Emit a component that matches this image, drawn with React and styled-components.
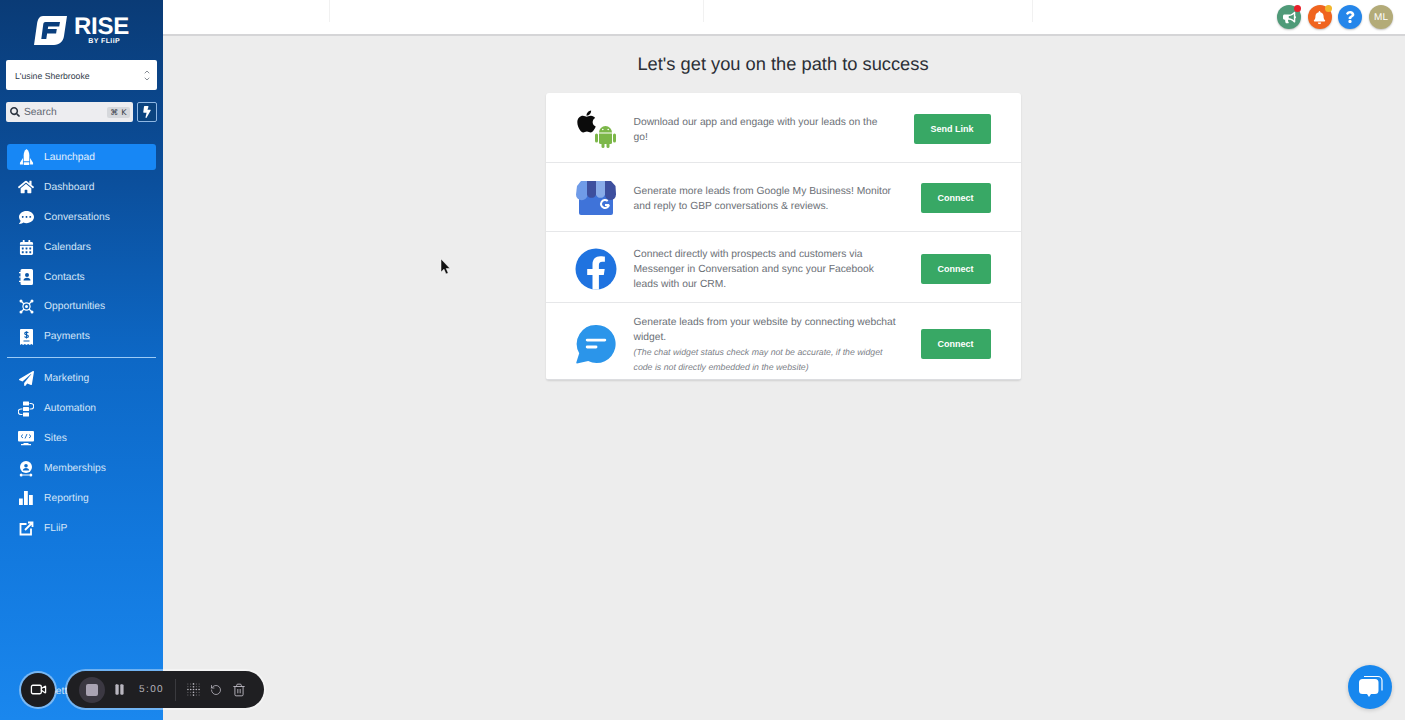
import React from "react";
import styled, { createGlobalStyle } from "styled-components";
import { ChevronUp, ChevronDown, Video, Pause, RotateCcw, Trash2 } from "lucide-react";
import {
  FaApple, FaBell, FaBullhorn, FaQuestion, FaSearch, FaBolt, FaHome, FaCommentDots,
  FaCalendarAlt, FaPaperPlane,
} from "react-icons/fa";

const GlobalStyle = createGlobalStyle`
  html, body { margin: 0; padding: 0; height: 100%; overflow: hidden; }
  body {
    font-family: "Liberation Sans", Arial, sans-serif;
    background: #ededed;
    text-rendering: geometricPrecision;
  }
  * { box-sizing: border-box; }
`;

const Page = styled.div`
  position: relative;
  display: flex;
  width: 1405px;
  height: 720px;
  overflow: hidden;
  background: #ededed;
`;

const Sidebar = styled.aside`
  display: flex;
  flex-direction: column;
  width: 163px;
  flex: none;
  height: 720px;
  padding: 16px 6px 0;
  background: linear-gradient(180deg, #0a3b76 0%, #0b4f9c 25%, #0d68c6 50%, #1278dd 75%, #1a87ee 100%);
`;

const LogoRow = styled.div`
  display: flex;
  align-items: flex-start;
  justify-content: center;
  gap: 7px;
  height: 44px;
  color: #fff;
`;

const LogoWords = styled.div`
  display: flex;
  flex-direction: column;
  align-items: flex-end;
  line-height: 1;
`;

const LogoTitle = styled.span`
  font-size: 24px;
  font-weight: 700;
  line-height: 21px;
  letter-spacing: -0.2px;
`;

const LogoSub = styled.span`
  margin-top: 1px;
  padding-right: 9px;
  font-size: 7px;
  font-weight: 700;
  letter-spacing: 0.4px;
`;

const Select = styled.div`
  display: flex;
  align-items: center;
  justify-content: space-between;
  height: 30px;
  padding: 1px 6px 0 9px;
  background: #fff;
  border-radius: 2px;
  font-size: 8.7px;
  color: #2f3a48;
`;

const Carets = styled.span`
  display: flex;
  flex-direction: column;
  align-items: center;
  color: #6f7680;
  svg { margin: -0.5px 0; }
`;

const SearchRow = styled.div`
  display: flex;
  gap: 4px;
  margin-top: 12px;
`;

const SearchBox = styled.div`
  display: flex;
  align-items: center;
  flex: 1;
  gap: 4px;
  height: 20px;
  padding: 0 3px 0 4px;
  background: #ededf0;
  border-radius: 2px;
  font-size: 10.3px;
  color: #5f6670;
  svg { color: #2c3440; }
`;

const SearchLabel = styled.span`
  flex: 1;
`;

const Kbd = styled.span`
  width: 23px;
  height: 11px;
  background: #d6d8dc;
  border-radius: 2px;
  font-size: 8px;
  line-height: 11px;
  text-align: center;
  letter-spacing: 0.3px;
  color: #39404a;
  font-family: "DejaVu Sans", sans-serif;
`;

const BoltButton = styled.button`
  display: flex;
  align-items: center;
  justify-content: center;
  width: 20px;
  height: 20px;
  padding: 0;
  background: #0a437f;
  border: 1px solid #8fb7e3;
  border-radius: 2px;
  color: #fff;
`;

const NavList = styled.nav`
  display: flex;
  flex-direction: column;
  gap: 3.9px;
  padding: 0 1px;
  margin-top: ${(p) => p.$top}px;
`;

const NavItem = styled.div`
  display: flex;
  align-items: center;
  height: 26px;
  padding: 1px 0 0 11px;
  border-radius: 3px;
  font-size: 10.3px;
  color: ${(p) => (p.$active ? "#e4f0fe" : "#d4e5f8")};
  background: ${(p) => (p.$active ? "#1787f5" : "transparent")};
`;

const NavIcon = styled.span`
  display: flex;
  align-items: center;
  justify-content: center;
  flex: none;
  width: 16px;
  height: 16px;
  margin-right: 10px;
  color: #fff;
`;

const Divider = styled.hr`
  width: 149px;
  height: 1px;
  margin: 8px 0 0 1px;
  border: 0;
  background: #9ccbf6;
`;

const SettingsRow = styled(NavList)`
  margin-top: auto;
  margin-bottom: 16px;
`;

const SettingsItem = styled(NavItem)`
  padding-left: 16px;
`;

const Main = styled.main`
  display: flex;
  flex-direction: column;
  flex: 1;
  min-width: 0;
`;

const TopBar = styled.header`
  display: grid;
  grid-template-columns: 167px 374px 329px 1fr;
  flex: none;
  height: 36px;
  background: #fff;
  border-bottom: 2px solid #d5d5d7;
`;

const TopCell = styled.div`
  border-right: 1px solid #f1f1f1;
  height: 22px;
  &:last-child { border-right: 0; height: 34px; }
`;

const TopActions = styled.div`
  display: flex;
  align-items: center;
  justify-content: flex-end;
  gap: 6.6px;
  height: 34px;
  padding-right: 12px;
`;

const RoundAction = styled.span`
  position: relative;
  display: flex;
  align-items: center;
  justify-content: center;
  width: 24px;
  height: 24px;
  border-radius: 50%;
  background: ${(p) => p.$bg};
  color: #fff;
  font-size: 10px;
  box-shadow: 0 1px 2px rgba(0, 0, 0, 0.25);
`;

const Dot = styled.span`
  position: absolute;
  top: 0;
  right: 0;
  width: 7px;
  height: 7px;
  border-radius: 50%;
  background: ${(p) => p.$bg};
`;

const Content = styled.div`
  display: flex;
  flex-direction: column;
  align-items: center;
  padding: 16px 2px 0 0;
`;

const Heading = styled.h1`
  margin: 0 0 17px;
  font-size: 18.3px;
  line-height: 24px;
  font-weight: 400;
  color: #2b2f36;
`;

const Card = styled.section`
  width: 475px;
  background: #fff;
  border-radius: 3px;
  box-shadow: 0 1px 2px rgba(0, 0, 0, 0.12);
`;

const Row = styled.div`
  display: flex;
  align-items: center;
  height: ${(p) => p.$height}px;
  padding: ${(p) => p.$nudge}px 30px 0 29px;
  border-bottom: 1px solid #e6e7e9;
  &:last-child { border-bottom: 1px solid #dcdde0; }
`;

const RowIcon = styled.div`
  position: relative;
  display: flex;
  align-items: center;
  justify-content: center;
  flex: none;
  width: 42px;
  height: 42px;
  margin-right: 17px;
`;

const RowText = styled.div`
  flex: 1;
  min-width: 0;
  padding: 2px 21px 0 0;
  font-size: 10.3px;
  line-height: 15px;
  color: #6b6f76;
`;

const RowNote = styled.em`
  display: block;
  max-width: 258px;
  font-size: 8.75px;
  color: #7c8087;
`;

const ConnectButton = styled.button`
  flex: none;
  width: ${(p) => p.$width}px;
  height: 30px;
  padding: 0;
  background: #38a865;
  border: 0;
  border-radius: 2px;
  color: #fff;
  font-family: inherit;
  font-size: 9px;
  font-weight: 700;
`;

const AppleMark = styled.span`
  position: absolute;
  left: -1px;
  top: 1px;
  color: #0b0b0b;
  display: flex;
`;

const AndroidMark = styled.svg`
  position: absolute;
  right: 1px;
  bottom: 2px;
`;

const Recorder = styled.div`
  position: absolute;
  left: 21px;
  top: 671px;
  display: flex;
  align-items: center;
  gap: 12px;
`;

const CameraButton = styled.span`
  display: flex;
  align-items: center;
  justify-content: center;
  width: 34px;
  height: 34px;
  border-radius: 50%;
  background: #1c1c1f;
  box-shadow: 0 0 0 2px rgba(255, 255, 255, 0.42);
  color: #fff;
`;

const RecorderBar = styled.div`
  display: flex;
  align-items: center;
  width: 197px;
  height: 37px;
  padding: 0 12px;
  border-radius: 19px;
  background: #1f1f22;
  box-shadow: 0 0 0 2px rgba(255, 255, 255, 0.38);
  color: #b9b6bf;
`;

const StopHalo = styled.span`
  display: flex;
  align-items: center;
  justify-content: center;
  flex: none;
  width: 26px;
  height: 26px;
  border-radius: 50%;
  background: #3b3842;
`;

const StopSquare = styled.span`
  width: 12px;
  height: 12px;
  border-radius: 2px;
  background: #a9a3b3;
`;

const Timer = styled.span`
  width: 25px;
  margin: 0 11px 0 13px;
  font-size: 10px;
  letter-spacing: 1.4px;
  white-space: nowrap;
  color: #b5b3ba;
`;

const BarSep = styled.span`
  flex: none;
  width: 1px;
  height: 22px;
  margin-right: 11px;
  background: #3a3a3e;
`;

const RecorderTools = styled.span`
  display: flex;
  align-items: center;
  gap: 10px;
`;

const PauseSlot = styled.span`
  display: flex;
  margin-left: 8px;
`;

const ChatFab = styled.button`
  position: absolute;
  left: 1348px;
  top: 665px;
  display: flex;
  align-items: center;
  justify-content: center;
  width: 44px;
  height: 44px;
  padding: 0;
  border: 0;
  border-radius: 50%;
  background: #1787ee;
  box-shadow: 0 1px 4px rgba(0, 0, 0, 0.18);
`;

const Cursor = styled.svg`
  position: absolute;
  left: 440px;
  top: 259px;
`;

const Rocket = () => (
  <svg width="15" height="17" viewBox="0 0 16 18" fill="#fff">
    <path d="M8 0C5.8 1.8 5 4 5 6.5V13h6V6.5C11 4 10.2 1.8 8 0z" />
    <path d="M4.2 9.5 1 14.5v2h3.2zM11.8 9.5l3.2 5v2h-3.2z" />
    <rect x="5" y="14" width="6" height="3" rx="0.5" />
  </svg>
);

const Contacts = () => (
  <svg width="14" height="16" viewBox="0 0 14 16">
    <path fill="#fff" d="M3 0h9.5A1.5 1.5 0 0 1 14 1.5v13a1.5 1.5 0 0 1-1.5 1.5H3a1.5 1.5 0 0 1-1.5-1.5v-13A1.5 1.5 0 0 1 3 0z" />
    <path fill="#fff" d="M0 3h2.5v1.2H0zM0 7.4h2.5v1.2H0zM0 11.8h2.5V13H0z" />
    <circle cx="8" cy="6" r="2" fill="#0b57a8" />
    <path fill="#0b57a8" d="M4.5 11.5c0-2 1.6-2.8 3.5-2.8s3.5.8 3.5 2.8z" />
  </svg>
);

const Opportunities = () => (
  <svg width="15" height="15" viewBox="0 0 15 15" fill="none" stroke="#fff" strokeWidth="1.2">
    <circle cx="7.5" cy="7.5" r="3.6" />
    <circle cx="7.5" cy="7.5" r="1.5" fill="#fff" stroke="none" />
    <path d="M2 2l3 3M13 2l-3 3M2 13l3-3M13 13l-3-3" />
    <g fill="#fff" stroke="none">
      <circle cx="2" cy="2" r="1.5" />
      <circle cx="13" cy="2" r="1.5" />
      <circle cx="2" cy="13" r="1.5" />
      <circle cx="13" cy="13" r="1.5" />
    </g>
  </svg>
);

const Payments = () => (
  <svg width="13" height="16" viewBox="0 0 13 16">
    <path fill="#fff" d="M1 0h11a1 1 0 0 1 1 1v15l-1.6-1-1.6 1-1.6-1-1.7 1-1.7-1-1.6 1-1.6-1L0 16V1a1 1 0 0 1 1-1z" />
    <path fill="#0b5fb5" d="M3.5 11.5h6v1h-6z" />
    <path fill="none" stroke="#0b5fb5" strokeWidth="1.1" d="M8.3 4c-.4-.6-1-.9-1.8-.9-1 0-1.8.5-1.8 1.3 0 1.8 3.7.9 3.7 2.8 0 .8-.9 1.3-1.9 1.3-.9 0-1.6-.4-2-1M6.5 2.2v7.2" />
  </svg>
);

const Automation = () => (
  <svg width="16" height="16" viewBox="0 0 16 16" fill="#fff">
    <rect x="5" y="0.5" width="6" height="4" rx="0.5" />
    <rect x="5" y="6" width="6" height="4" rx="0.5" />
    <rect x="5" y="11.5" width="6" height="4" rx="0.5" />
    <path fill="none" stroke="#fff" strokeWidth="1.1" d="M11.5 2.5h1.5a2 2 0 0 1 0 5.5h-1.5M4.5 8H3a2.7 2.7 0 0 0 0 5.5h1.5" />
  </svg>
);

const Sites = () => (
  <svg width="16" height="15" viewBox="0 0 16 15">
    <rect width="16" height="10.5" rx="1" fill="#fff" />
    <path fill="#fff" d="M5.5 12h5v1h2.5v1.3H3V13h2.5z" />
    <path fill="none" stroke="#0c66c2" strokeWidth="0.9" d="M5 3.5 3 5.3 5 7M11 3.5l2 1.8L11 7M9 3 7 7.5" />
  </svg>
);

const Memberships = () => (
  <svg width="14" height="16" viewBox="0 0 14 16">
    <circle cx="7" cy="6" r="6" fill="#fff" />
    <circle cx="7" cy="4.7" r="1.8" fill="#0c6ccb" />
    <path fill="#0c6ccb" d="M3.8 9.5c0-1.8 1.5-2.6 3.2-2.6s3.2.8 3.2 2.6z" />
    <circle cx="2.2" cy="14" r="1.5" fill="#fff" />
    <circle cx="11.8" cy="14" r="1.5" fill="#fff" />
    <path fill="none" stroke="#fff" d="M3.5 14h7" />
  </svg>
);

const Reporting = () => (
  <svg width="14" height="14" viewBox="0 0 14 14" fill="#fff">
    <rect x="0" y="7.5" width="3.8" height="6.5" />
    <rect x="5" y="0" width="3.8" height="14" />
    <rect x="10" y="4" width="3.8" height="10" />
  </svg>
);

const ExternalEdit = () => (
  <svg width="15" height="15" viewBox="0 0 15 15" fill="none" stroke="#fff" strokeWidth="1.8">
    <path d="M7.5 3H1.5v10.5H12V7.5" />
    <path d="M6 9 13 2M9 1.5h4.5V6" />
  </svg>
);

const LogoMark = () => (
  <svg width="33" height="29" viewBox="0 0 33 29">
    <path fill="#fff" fillRule="evenodd" d="M9 0h24l-3 20c-.8 5.5-4.5 9-10 9H0L3 8C3.7 3 5.5 0 9 0zm2.5 6c-1.3 0-2 .7-2.2 2l-2 15h5l.8-5.5h9l.7-4.5h-9l.4-2.5h11l.8-4.5z" />
  </svg>
);

const Gbp = () => (
  <svg width="40" height="36" viewBox="0 0 40 36">
    <path fill="#3f73d9" d="M3 13h34v20a2 2 0 0 1-2 2H5a2 2 0 0 1-2-2z" />
    <path fill="#6f9be8" d="M5 1h6.5v13.5a5.5 5.5 0 0 1-11.5 0L1 6z" />
    <path fill="#3d4f9e" d="M11 1h9v13.5a4.7 4.7 0 0 1-9 0z" />
    <path fill="#89ace9" d="M20 1h9v13.5a4.7 4.7 0 0 1-9 0z" />
    <path fill="#3d4f9e" d="M29 1h6l4.5 5 .5 8.5a5.5 5.5 0 0 1-11 0z" />
    <path fill="none" stroke="#fff" strokeWidth="2" d="M33 24.5a4 4 0 1 1-1.3-3.5M33 25h-4" />
  </svg>
);

const Facebook = () => (
  <svg width="42" height="42" viewBox="0 0 42 42">
    <circle cx="21" cy="21" r="20.5" fill="#1f73e0" />
    <path fill="#fff" d="M17.5 41.5V27h-5.3v-6h5.3v-4.6c0-5.2 3.1-8.1 7.8-8.1 2.3 0 4.6.4 4.6.4v5.1h-2.6c-2.6 0-3.4 1.6-3.4 3.2V21h5.8l-.9 6h-4.9v14.5z" />
  </svg>
);

const ChatBubble = () => (
  <svg width="40" height="40" viewBox="0 0 41 41">
    <path fill="#2b95ea" d="M21 1a19.5 19.5 0 1 1-8.5 37L1 40.5c-.7 0-.9-.6-.6-1.2L3.3 30A19.5 19.5 0 0 1 21 1z" />
    <rect x="10" y="15" width="21" height="3" rx="1.5" fill="#fff" />
    <rect x="10" y="22" width="12" height="3" rx="1.5" fill="#fff" />
  </svg>
);

const GripDots = () => (
  <svg width="13" height="13" viewBox="0 0 14 14" fill="#b5b3ba">
    {[1, 4, 7, 10, 13].flatMap((x) =>
      [1, 4, 7, 10, 13].map((y) => <circle key={`${x}-${y}`} cx={x} cy={y} r={x === 7 || y === 7 ? 0.9 : 0.5} />)
    )}
  </svg>
);

const primaryNav = [
  ["Launchpad", <Rocket />, true],
  ["Dashboard", <FaHome size={16} />],
  ["Conversations", <FaCommentDots size={15} />],
  ["Calendars", <FaCalendarAlt size={15} />],
  ["Contacts", <Contacts />],
  ["Opportunities", <Opportunities />],
  ["Payments", <Payments />],
];

const secondaryNav = [
  ["Marketing", <FaPaperPlane size={15} />],
  ["Automation", <Automation />],
  ["Sites", <Sites />],
  ["Memberships", <Memberships />],
  ["Reporting", <Reporting />],
  ["FLiiP", <ExternalEdit />],
];

const NavLink = ({ label, icon, active }) => (
  <NavItem $active={active}>
    <NavIcon>{icon}</NavIcon>
    {label}
  </NavItem>
);

export default function App() {
  return (
    <Page>
      <GlobalStyle />
      <Sidebar>
        <LogoRow>
          <LogoMark />
          <LogoWords>
            <LogoTitle>RISE</LogoTitle>
            <LogoSub>BY FLiiP</LogoSub>
          </LogoWords>
        </LogoRow>
        <Select>
          L'usine Sherbrooke
          <Carets>
            <ChevronUp size={8} strokeWidth={2.5} />
            <ChevronDown size={8} strokeWidth={2.5} />
          </Carets>
        </Select>
        <SearchRow>
          <SearchBox>
            <FaSearch size={10} />
            <SearchLabel>Search</SearchLabel>
            <Kbd>⌘ K</Kbd>
          </SearchBox>
          <BoltButton>
            <FaBolt size={12} />
          </BoltButton>
        </SearchRow>
        <NavList $top={22}>
          {primaryNav.map(([label, icon, active]) => (
            <NavLink key={label} label={label} icon={icon} active={active} />
          ))}
        </NavList>
        <Divider />
        <NavList $top={7}>
          {secondaryNav.map(([label, icon]) => (
            <NavLink key={label} label={label} icon={icon} />
          ))}
        </NavList>
        <SettingsRow $top={0}>
          <SettingsItem>
            <NavIcon />
            Settings
          </SettingsItem>
        </SettingsRow>
      </Sidebar>
      <Main>
        <TopBar>
          <TopCell />
          <TopCell />
          <TopCell />
          <TopCell>
            <TopActions>
              <RoundAction $bg="#4f9a78">
                <FaBullhorn size={13} />
                <Dot $bg="#e8212b" />
              </RoundAction>
              <RoundAction $bg="#f0641e">
                <FaBell size={13} />
                <Dot $bg="#f2b72e" />
              </RoundAction>
              <RoundAction $bg="#2586ea">
                <FaQuestion size={12} />
              </RoundAction>
              <RoundAction $bg="#b3ab78">ML</RoundAction>
            </TopActions>
          </TopCell>
        </TopBar>
        <Content>
          <Heading>Let's get you on the path to success</Heading>
          <Card>
            <Row $height={70} $nudge={2}>
              <RowIcon>
                <AppleMark>
                  <FaApple size={25} />
                </AppleMark>
                <AndroidMark width="21" height="23" viewBox="0 0 21 23" fill="#7cb749">
                  <path d="M4 7.5a6.5 6.5 0 0 1 13 0z" />
                  <path d="M4 8.5h13v9a1.5 1.5 0 0 1-1.5 1.5h-10A1.5 1.5 0 0 1 4 17.5z" />
                  <rect x="0" y="8.5" width="3" height="9" rx="1.5" />
                  <rect x="18" y="8.5" width="3" height="9" rx="1.5" />
                  <rect x="6.5" y="17" width="3" height="6" rx="1.5" />
                  <rect x="11.5" y="17" width="3" height="6" rx="1.5" />
                  <circle cx="7.8" cy="4.5" r="0.8" fill="#fff" />
                  <circle cx="13.2" cy="4.5" r="0.8" fill="#fff" />
                </AndroidMark>
              </RowIcon>
              <RowText>Download our app and engage with your leads on the go!</RowText>
              <ConnectButton $width={77}>Send Link</ConnectButton>
            </Row>
            <Row $height={69} $nudge={2}>
              <RowIcon>
                <Gbp />
              </RowIcon>
              <RowText>Generate more leads from Google My Business! Monitor and reply to GBP conversations &amp; reviews.</RowText>
              <ConnectButton $width={70}>Connect</ConnectButton>
            </Row>
            <Row $height={71} $nudge={3}>
              <RowIcon>
                <Facebook />
              </RowIcon>
              <RowText>Connect directly with prospects and customers via Messenger in Conversation and sync your Facebook leads with our CRM.</RowText>
              <ConnectButton $width={70}>Connect</ConnectButton>
            </Row>
            <Row $height={77} $nudge={5}>
              <RowIcon>
                <ChatBubble />
              </RowIcon>
              <RowText>
                Generate leads from your website by connecting webchat widget.
                <RowNote>(The chat widget status check may not be accurate, if the widget code is not directly embedded in the website)</RowNote>
              </RowText>
              <ConnectButton $width={70}>Connect</ConnectButton>
            </Row>
          </Card>
        </Content>
      </Main>
      <Cursor width="11" height="16" viewBox="0 0 11 16">
        <path d="M1 0v13l3-2.8 2 4.8 2.2-1-2-4.5H10z" fill="#111" stroke="#fff" strokeWidth="0.5" />
      </Cursor>
      <Recorder>
        <CameraButton>
          <Video size={17} strokeWidth={1.8} />
        </CameraButton>
        <RecorderBar>
          <StopHalo>
            <StopSquare />
          </StopHalo>
          <PauseSlot>
            <Pause size={13} fill="#b9b6bf" strokeWidth={1} />
          </PauseSlot>
          <Timer>5:00</Timer>
          <BarSep />
          <RecorderTools>
            <GripDots />
            <RotateCcw size={12} strokeWidth={1.6} />
            <Trash2 size={14} strokeWidth={1.6} />
          </RecorderTools>
        </RecorderBar>
      </Recorder>
      <ChatFab>
        <svg width="26" height="24" viewBox="0 0 26 24">
          <path fill="none" stroke="#fff" strokeWidth="1.2" d="M7 1.5h14a4 4 0 0 1 4 4v10" />
          <path fill="#fff" d="M5.5 4h12.5a3.5 3.5 0 0 1 3.5 3.5v8a3.5 3.5 0 0 1-3.5 3.5h-4l-2 3-2-3H5.5A3.5 3.5 0 0 1 2 15.5v-8A3.5 3.5 0 0 1 5.5 4z" />
        </svg>
      </ChatFab>
    </Page>
  );
}
